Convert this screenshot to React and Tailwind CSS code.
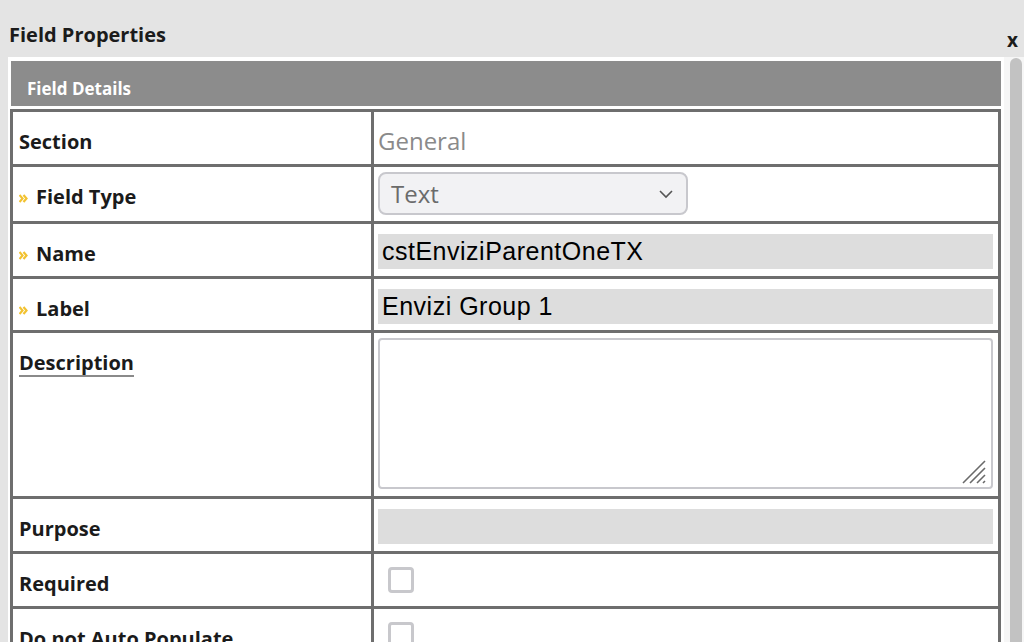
import React from "react";

function Chevrons() {
  return (
    <svg width="9" height="9" viewBox="0 0 9 9" className="mr-[8px] mt-[3px] shrink-0">
      <path d="M0.5 1 L3.5 4.5 L0.5 8 M4.5 1 L7.5 4.5 L4.5 8" fill="none" stroke="#f2c230" strokeWidth="2.2" />
    </svg>
  );
}

function Fila({ label, required, underline, h, children }) {
  return (
    <div className="flex border-b-[3px] border-[#6e6e6e]">
      <div className={`w-[361px] shrink-0 border-r-[3px] border-[#6e6e6e] pl-[6px] pt-[18px] ${h}`}>
        <div className="flex items-center text-[20px] leading-[24px] font-bold text-[#1b1b1b]">
          {required && <Chevrons />}
          <span className={underline ? "underline decoration-[#8a8a8a] decoration-2 underline-offset-[5px]" : ""}>{label}</span>
        </div>
      </div>
      <div className={`flex-1 pl-[4px] pr-[5px] ${h}`}>{children}</div>
    </div>
  );
}

function Caja({ children }) {
  return (
    <div className="mt-[10px] h-[35px] bg-[#dddddd] pl-[4px] flex items-center text-[25px] tracking-[0.5px] text-black font-['Liberation_Sans',sans-serif]">
      {children}
    </div>
  );
}

function Check() {
  return <div className="mt-[13px] ml-[10px] w-[26px] h-[26px] rounded-[4px] border-[3px] border-[#c8c8cc] bg-white" />;
}

export default function App() {
  return (
    <div className="h-[642px] overflow-hidden bg-[#e4e4e4] font-['Open_Sans',sans-serif]">
      {/* Encabezado */}
      <div className="h-[57px] flex justify-between items-start pl-[9px] pr-[6px]">
        <h1 className="mt-[21px] text-[20px] leading-[28px] font-bold text-[#1b1b1b]">Field Properties</h1>
        <span className="mt-[28px] text-[19px] leading-[24px] font-bold text-[#1b1b1b]">x</span>
      </div>

      <div className="flex">
        {/* Panel */}
        <div className="ml-[8px] w-[996px] bg-white pt-[4px] px-[3px] h-[600px]">
          <div className="h-[45px] bg-[#8c8c8c] pl-[16px] pt-[16px] text-[17px] leading-[24px] font-bold text-white">Field Details</div>
          <div className="mt-[3px] -ml-px border-[3px] border-b-0 border-[#6e6e6e]">
            <Fila label="Section" h="h-[52px]">
              <div className="pt-[13px] text-[24px] leading-[32px] text-[#8a8a8a]">General</div>
            </Fila>
            <Fila label="Field Type" required h="h-[54px]">
              <div className="mt-[5px] w-[310px] h-[43px] rounded-[8px] border-2 border-[#c8c8cd] bg-[#f2f2f4] flex items-center justify-between pl-[11px] pr-[12px]">
                <span className="text-[24px] text-[#6b6b6b]">Text</span>
                <svg width="16" height="10" viewBox="0 0 16 10">
                  <path d="M2 2 L8 8 L14 2" fill="none" stroke="#555" strokeWidth="1.6" />
                </svg>
              </div>
            </Fila>
            <Fila label="Name" required h="h-[52px]">
              <Caja>cstEnviziParentOneTX</Caja>
            </Fila>
            <Fila label="Label" required h="h-[51px]">
              <Caja>Envizi Group 1</Caja>
            </Fila>
            <Fila label="Description" underline h="h-[163px]">
              <div className="relative mt-[5px] h-[151px] rounded-[4px] border-2 border-[#c8c8cd] bg-white">
                <svg width="26" height="26" viewBox="0 0 26 26" className="absolute right-[3px] bottom-[2px]">
                  <path d="M1 24 L23 2 M8 24 L23 9 M15 24 L23 16 M21 24 L23 22" stroke="#6a6a6a" strokeWidth="1.6" />
                </svg>
              </div>
            </Fila>
            <Fila label="Purpose" h="h-[52px]">
              <Caja />
            </Fila>
            <Fila label="Required" h="h-[52px]">
              <Check />
            </Fila>
            <Fila label="Do not Auto Populate" h="h-[52px]">
              <Check />
            </Fila>
          </div>
        </div>

        {/* Barra de desplazamiento */}
        <div className="w-[20px] h-[600px] bg-[#f6f6f6] pl-[6px] pt-px">
          <div className="w-[12px] h-[620px] rounded-full bg-[#c2c2c2]" />
        </div>
      </div>
    </div>
  );
}
